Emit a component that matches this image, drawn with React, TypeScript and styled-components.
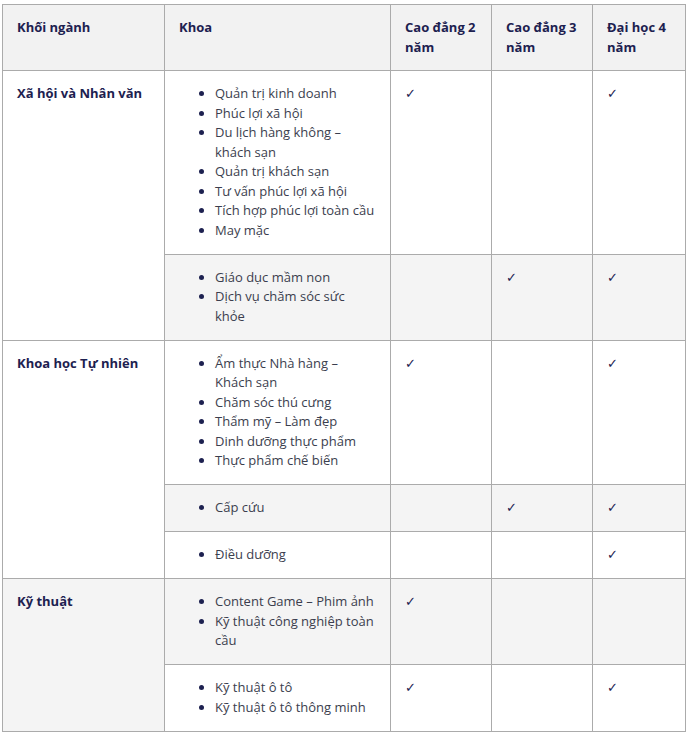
import React from "react";
import styled, { createGlobalStyle } from "styled-components";

const Global = createGlobalStyle`
  html, body { margin: 0; padding: 0; background: #ffffff; }
  body { font-family: "Open Sans", "Noto Sans", sans-serif; }
`;

const Wrap = styled.div`
  padding: 4px 0 0 2px;
`;

const Table = styled.table`
  border-collapse: collapse;
  width: 683px;
  table-layout: fixed;
  font-size: 13px;
  line-height: 19.5px;
  color: #3b3e4e;
`;

const Row = styled.tr<{ $shade?: boolean }>`
  background: ${(p) => (p.$shade ? "#f4f4f4" : "#ffffff")};
`;

const Head = styled.th`
  background: #f2f2f2;
  border: 1px solid #ababab;
  padding: 13px 14px;
  text-align: left;
  vertical-align: top;
  font-weight: 700;
  color: #1d2150;
`;

const Cell = styled.td<{ $bold?: boolean }>`
  border: 1px solid #ababab;
  padding: 13px 14px 13.5px;
  vertical-align: top;
  font-weight: ${(p) => (p.$bold ? 700 : 400)};
  color: ${(p) => (p.$bold ? "#1d2150" : "#3b3e4e")};
`;

const List = styled.ul`
  margin: 0;
  padding: 0 0 0 36px;
  li::marker { color: #1d2150; }
`;

const Check = styled.span`
  color: #1d2150;
`;

type R = {
  group?: { name: string; span: number };
  items: string[];
  c2: boolean;
  c3: boolean;
  d4: boolean;
  shade: boolean;
};

const rows: R[] = [
  {
    group: { name: "Xã hội và Nhân văn", span: 2 },
    items: [
      "Quản trị kinh doanh",
      "Phúc lợi xã hội",
      "Du lịch hàng không – khách sạn",
      "Quản trị khách sạn",
      "Tư vấn phúc lợi xã hội",
      "Tích hợp phúc lợi toàn cầu",
      "May mặc",
    ],
    c2: true, c3: false, d4: true, shade: false,
  },
  { items: ["Giáo dục mầm non", "Dịch vụ chăm sóc sức khỏe"], c2: false, c3: true, d4: true, shade: true },
  {
    group: { name: "Khoa học Tự nhiên", span: 3 },
    items: [
      "Ẩm thực Nhà hàng – Khách sạn",
      "Chăm sóc thú cưng",
      "Thẩm mỹ – Làm đẹp",
      "Dinh dưỡng thực phẩm",
      "Thực phẩm chế biến",
    ],
    c2: true, c3: false, d4: true, shade: false,
  },
  { items: ["Cấp cứu"], c2: false, c3: true, d4: true, shade: true },
  { items: ["Điều dưỡng"], c2: false, c3: false, d4: true, shade: false },
  {
    group: { name: "Kỹ thuật", span: 2 },
    items: ["Content Game – Phim ảnh", "Kỹ thuật công nghiệp toàn cầu"],
    c2: true, c3: false, d4: false, shade: true,
  },
  { items: ["Kỹ thuật ô tô", "Kỹ thuật ô tô thông minh"], c2: true, c3: false, d4: true, shade: false },
];

const Mark = ({ on }: { on: boolean }) => (on ? <Check>✓</Check> : null);

export default function App() {
  return (
    <>
      <Global />
      <Wrap>
        <Table>
          <colgroup>
            <col style={{ width: 162 }} />
            <col style={{ width: 226 }} />
            <col style={{ width: 101 }} />
            <col style={{ width: 101 }} />
            <col style={{ width: 93 }} />
          </colgroup>
          <thead>
            <tr>
              <Head>Khối ngành</Head>
              <Head>Khoa</Head>
              <Head>Cao đẳng 2 năm</Head>
              <Head>Cao đẳng 3 năm</Head>
              <Head>Đại học 4 năm</Head>
            </tr>
          </thead>
          <tbody>
            {rows.map((r, i) => (
              <Row key={i} $shade={r.shade}>
                {r.group && (
                  <Cell $bold rowSpan={r.group.span}>
                    {r.group.name}
                  </Cell>
                )}
                <Cell>
                  <List>
                    {r.items.map((t) => (
                      <li key={t}>{t}</li>
                    ))}
                  </List>
                </Cell>
                <Cell><Mark on={r.c2} /></Cell>
                <Cell><Mark on={r.c3} /></Cell>
                <Cell><Mark on={r.d4} /></Cell>
              </Row>
            ))}
          </tbody>
        </Table>
      </Wrap>
    </>
  );
}
